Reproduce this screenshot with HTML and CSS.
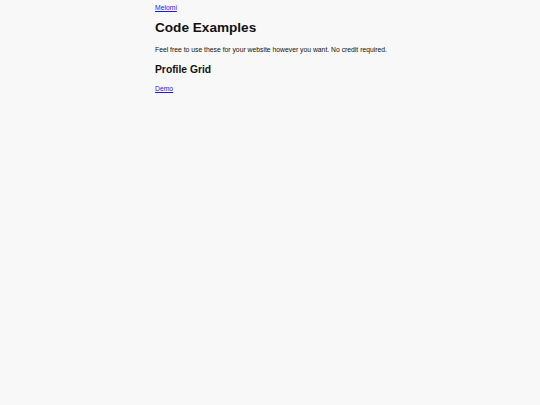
FILE: index.html
```html
<!doctype html>
<html>
<head>
<meta charset="utf-8">
<title>Code Examples</title>
<link rel="stylesheet" href="styles.css">
</head>
<body>
<div class="wrap">
	<a href="#" class="home">Melomi</a>
	<h1>Code Examples</h1>
	<p>Feel free to use these for your website however you want. No credit required.</p>
	<h2>Profile Grid</h2>
	<a href="#" class="demo">Demo</a>
</div>
</body>
</html>
```
FILE: styles.css
```css
*{margin:0; padding:0;}
body{background:#f8f8f8; font-family:"Liberation Sans", Arial, sans-serif; color:#111;}
.wrap{width:230px; margin:0 auto; padding-top:4px; font-size:6.8px; line-height:8px;}
a{color:#1a1ae0;}
.home, .demo{display:inline-block; vertical-align:top;}
h1{font-size:13.6px; line-height:16px; margin-top:8px;}
p{margin-top:10px; white-space:nowrap;}
h2{font-size:10.3px; line-height:12px; margin-top:10px;}
.demo{margin-top:9px;}
```
